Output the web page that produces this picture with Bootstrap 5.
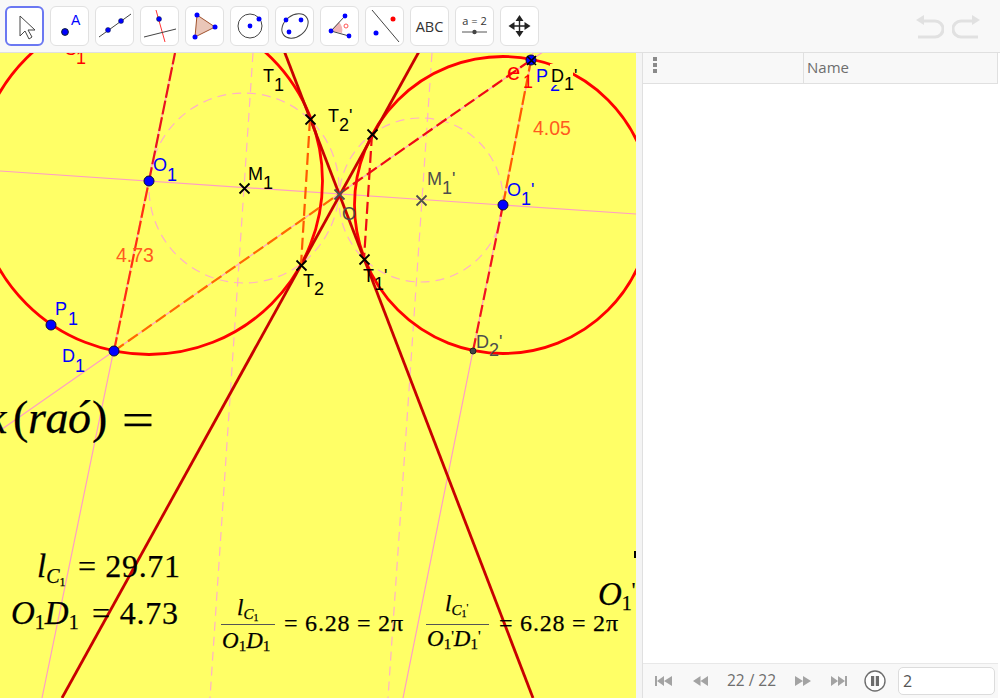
<!DOCTYPE html>
<html lang="en">
<head>
    <meta charset="UTF-8">
    <meta name="viewport" content="width=device-width, initial-scale=1.0">
    <title>GeoGebra</title>
    <link href="https://cdn.jsdelivr.net/npm/bootstrap@5.3.1/dist/css/bootstrap.min.css" rel="stylesheet">
    <style>
        html, body { height: 100%; overflow: hidden; background: #fff; }
        .ggb-app { width: 1000px; height: 698px; font-family: "Open Sans", "Noto Sans", sans-serif; }
        .ggb-top { height: 53px; background: #f8f8f8; border-bottom: 1px solid #e0e0e0; padding: 6px 0 0 5px; gap: 6px; }
        .tool-btn { width: 39px; height: 40px; padding: 0; background: #fff; border: 1px solid #e1e1e1; border-radius: 6px; }
        .tool-btn.is-active { border: 2px solid #6b78f2; }
        .undo-wrap { margin-right: 20px; gap: 8px; padding-top: 9px; }
        .ggb-main { height: 645px; }
        .ggb-canvas { width: 636px; height: 645px; background: #ffff66; overflow: hidden; flex: none; }
        .ggb-canvas svg { display: block; }
        .ggb-split { width: 6px; background: #f4f4f4; flex: none; }
        .ggb-side { width: 356px; border-left: 1px solid #e0e0e0; flex: none; }
        .side-head { height: 31px; background: #f8f8f8; border-bottom: 1px solid #e0e0e0; border-right: 1px solid #e0e0e0; color: #6e6e6e; font-size: 15px; }
        .side-dots { width: 161px; padding: 4px 0 0 10px; border-right: 1px solid #e0e0e0; gap: 2px; }
        .side-dots i { display: block; width: 4px; height: 4px; background: #8a8a8a; }
        .side-name { padding: 3px 0 0 3px; }
        .side-foot { height: 35px; background: #f8f8f8; border-top: 1px solid #e8e8e8; color: #6e6e6e; font-size: 15.5px; padding-left: 12px; }
        .side-count { width: 87px; text-align: center; }
        .side-input { width: 97px; height: 28px; padding: 0 4px; margin-left: 12px; font-size: 16px; color: #555; border: 1px solid #dcdcdc; border-radius: 5px; background: #fff; }
        .nav-a { margin-right: 21px; }
        .nav-b { margin-right: 20px; }
        .nav-c { margin-right: 17px; }
        .m-big { font-family: "Liberation Serif", serif; fill: #000; stroke: #000; stroke-width: .25px; }
        .m-it { font-style: italic; }
        .lbl { font-family: "Liberation Sans", sans-serif; font-size: 18px; }
        .val { font-size: 19.5px; }
        .b { fill: #0000ff; }
        .k { fill: #000; }
        .g { fill: #4d4d4d; }
        .o { fill: #ff5a1e; }
        .r { fill: #ff0000; }
    </style>
</head>
<body>
<div class="ggb-app d-flex flex-column">
    <div class="ggb-top d-flex">
        <button class="btn tool-btn is-active"><svg width="35" height="36" viewBox="0 0 35 36"><path d="M13 8v20l5-5 4 8 3-2-4-7h7z" fill="#fff" stroke="#444" stroke-width="1"/></svg></button>
        <button class="btn tool-btn"><svg width="37" height="38" viewBox="0 0 37 38"><circle cx="14" cy="25" r="3.4" fill="#00f" stroke="#123"/><text x="20" y="18" font-family="Liberation Sans" font-size="14" fill="#00f">A</text></svg></button>
        <button class="btn tool-btn"><svg width="37" height="38" viewBox="0 0 37 38"><path d="M3 30 35 7" stroke="#444"/><circle cx="12" cy="23" r="2.5" fill="#00f" stroke="#123" stroke-width=".5"/><circle cx="25" cy="14" r="2.5" fill="#00f" stroke="#123" stroke-width=".5"/></svg></button>
        <button class="btn tool-btn"><svg width="37" height="38" viewBox="0 0 37 38"><path d="M15 3l9 32" stroke="#f33"/><path d="M3 30l32-8" stroke="#444"/><circle cx="18" cy="12" r="2.5" fill="#00f" stroke="#123" stroke-width=".5"/></svg></button>
        <button class="btn tool-btn"><svg width="37" height="38" viewBox="0 0 37 38"><path d="M11 8 9 30l20-10z" fill="#eac6b8" stroke="#a0522d"/><circle cx="11" cy="8" r="2.5" fill="#00f"/><circle cx="9" cy="30" r="2.5" fill="#00f"/><circle cx="29" cy="20" r="2.5" fill="#00f"/></svg></button>
        <button class="btn tool-btn"><svg width="37" height="38" viewBox="0 0 37 38"><circle cx="19" cy="19" r="12" fill="none" stroke="#444"/><circle cx="19" cy="19" r="2.4" fill="#00f"/><circle cx="28" cy="12" r="2.5" fill="#00f"/></svg></button>
        <button class="btn tool-btn"><svg width="37" height="38" viewBox="0 0 37 38"><ellipse cx="19" cy="19" rx="14.5" ry="10.5" transform="rotate(-38 19 19)" fill="none" stroke="#444"/><circle cx="10" cy="13" r="2.4" fill="#00f"/><circle cx="25" cy="13" r="2.4" fill="#00f"/><circle cx="13" cy="25" r="2.4" fill="#00f"/></svg></button>
        <button class="btn tool-btn"><svg width="37" height="38" viewBox="0 0 37 38"><path d="M10 24 18 15A12 12 0 0 1 21 26z" fill="#f0b4b4"/><path d="M24 9 10 24l18 5" fill="none" stroke="#444"/><circle cx="10" cy="24" r="2.4" fill="#00f"/><circle cx="24" cy="9" r="2.4" fill="#00f"/><circle cx="28" cy="29" r="2.4" fill="#00f"/><circle cx="25" cy="19" r="2" fill="none" stroke="#f55"/></svg></button>
        <button class="btn tool-btn"><svg width="37" height="38" viewBox="0 0 37 38"><path d="M6 3 33 35" stroke="#444"/><circle cx="27" cy="12" r="2.5" fill="#f00"/><circle cx="10" cy="26" r="2.5" fill="#00f"/></svg></button>
        <button class="btn tool-btn"><svg width="37" height="38" viewBox="0 0 37 38"><text x="18.5" y="25" text-anchor="middle" font-family="Open Sans" font-size="14.5" fill="#333">ABC</text></svg></button>
        <button class="btn tool-btn"><svg width="37" height="38" viewBox="0 0 37 38"><text x="18.5" y="18" text-anchor="middle" font-family="Open Sans" font-size="11" fill="#333">a = 2</text><path d="M6 25h25" stroke="#555"/><circle cx="18.5" cy="25" r="2.2" fill="#444"/></svg></button>
        <button class="btn tool-btn"><svg width="37" height="38" viewBox="0 0 37 38"><path d="M18.5 10v18M10 19h18" stroke="#222" stroke-width="1.4"/><path d="M18.5 8l-4 6h8zM18.5 30l-4-6h8zM7.5 19l6-4v8zM29.5 19l-6-4v8z" fill="#222"/></svg></button>
        <div class="undo-wrap d-flex ms-auto">
            <svg width="28" height="24" viewBox="0 0 28 24"><path d="M7 6H19a8 8 0 0 1 0 16H2" fill="none" stroke="#e1e1e1" stroke-width="3"/><path d="M0 5 8 0v10z" fill="#e1e1e1"/></svg>
            <svg width="28" height="24" viewBox="0 0 28 24"><path d="M21 6H9a8 8 0 0 0 0 16h17" fill="none" stroke="#e1e1e1" stroke-width="3"/><path d="M28 5 20 0v10z" fill="#e1e1e1"/></svg>
        </div>
    </div>
    <div class="ggb-main d-flex">
        <div class="ggb-canvas">
            <svg width="636" height="645" viewBox="0 53 636 645">
                <!-- lineas finas -->
                <g stroke="#ff9ec4" stroke-width="1.2" fill="none">
                    <path d="M0 171 636 214"/>
                    <path d="M0 430.6 531 60l12-8"/>
                    <path d="M42 698 175 53"/>
                    <path d="M403 698 533 53"/>
                </g>
                <g stroke="#ffb0c8" stroke-width="1.2" fill="none" stroke-dasharray="9 6">
                    <circle cx="244" cy="188" r="95"/>
                    <circle cx="421" cy="200" r="82"/>
                    <path d="M253 53 210 698"/>
                    <path d="M432 53 388 698"/>
                </g>
                <!-- circunferencias -->
                <g stroke="#ff0000" stroke-width="2.8" fill="none">
                    <circle cx="149" cy="181" r="173.5"/>
                    <circle cx="503" cy="205" r="148.5"/>
                </g>
                <!-- tangentes -->
                <g stroke="#c80000" stroke-width="2.8" fill="none">
                    <path d="M283 48 533 698"/>
                    <path d="M421 48 62 698"/>
                </g>
                <!-- radios -->
                <g stroke-width="2.2" fill="none" stroke-dasharray="12 5">
                    <path d="M114 351 149 181" stroke="#ff3010" stroke-dasharray="14 3"/>
                    <path d="M149 181 175 53" stroke="#e8141e" stroke-dasharray="14 3"/>
                    <path d="M114 351 339 194" stroke="#ff6a00"/>
                    <path d="M339 194 531 60" stroke="#ee0a14"/>
                    <path d="M503 205 531 60" stroke="#ff5a00" stroke-dasharray="14 3"/>
                    <path d="M503 205 473 351" stroke="#f0141e"/>
                    <path d="M310 119 301 265" stroke="#ff5a00"/>
                    <path d="M372 134 364 259" stroke="#ee0a14"/>
                </g>
                <!-- cruces -->
                <g stroke="#000" stroke-width="1.8">
                    <path d="M305.500 114.500l10 10m0-10-10 10"/>
                    <path d="M367.500 129.500l10 10m0-10-10 10"/>
                    <path d="M296.500 260.500l10 10m0-10-10 10"/>
                    <path d="M359.500 254.500l10 10m0-10-10 10"/>
                    <path d="M239.500 183.500l10 10m0-10-10 10"/>
                </g>
                <g stroke="#4d4d4d" stroke-width="1.8">
                    <path d="M334.500 189.500l10 10m0-10-10 10"/>
                    <path d="M416.500 195.500l10 10m0-10-10 10"/>
                </g>
                <!-- puntos -->
                <g fill="#0000ff" stroke="#0a0a33" stroke-width="1">
                    <circle cx="149" cy="181" r="5"/>
                    <circle cx="51" cy="325" r="5"/>
                    <circle cx="114" cy="351" r="5"/>
                    <circle cx="503" cy="205" r="5"/>
                    <circle cx="531" cy="60" r="5"/>
                </g>
                <circle cx="473" cy="351" r="3" fill="#444" stroke="#222"/>
                <path d="M527 56l9 9m0-9-9 9" stroke="#000" stroke-width="1.6"/>
                <!-- etiquetas -->
                <g class="lbl">
                    <text x="64" y="55" class="r">C<tspan dx="-1" dy="9">1</tspan></text>
                    <text x="153" y="171" class="b">O<tspan dy="10">1</tspan></text>
                    <text x="55" y="315" class="b">P<tspan dx="1" dy="10">1</tspan></text>
                    <text x="62" y="362" class="b">D<tspan dy="10">1</tspan></text>
                    <text x="263" y="82" class="k">T<tspan dy="9">1</tspan></text>
                    <text x="328" y="122" class="k">T<tspan dy="9">2</tspan><tspan dy="-9">'</tspan></text>
                    <text x="248" y="180" class="k">M<tspan dy="9">1</tspan></text>
                    <text x="427" y="185" class="g">M<tspan dy="9">1</tspan><tspan dy="-9">'</tspan></text>
                    <text x="342" y="220" class="g">O</text>
                    <text x="303" y="287" class="k">T<tspan dy="8">2</tspan></text>
                    <text x="363" y="282" class="k">T<tspan dy="8">1</tspan><tspan dy="-8">'</tspan></text>
                    <text x="507" y="196" class="b">O<tspan dy="9">1</tspan><tspan dy="-9">'</tspan></text>
                    <text x="476" y="348" class="g">D<tspan dy="8">2</tspan><tspan dy="-8">'</tspan></text>
                    <text x="507" y="80" class="r" font-size="24">e</text>
                    <text x="523" y="88" class="r">1</text>
                    <text x="536" y="82" class="b">P<tspan dx="2" dy="9">2</tspan></text>
                    <rect x="550" y="64" width="23" height="21" fill="#ffff66"/>
                    <text x="551" y="82" class="k">D<tspan dy="8">1</tspan><tspan dy="-8">'</tspan></text>
                    <text x="533" y="135" class="o val">4.05</text>
                    <text x="116" y="262" class="o val">4.73</text>
                </g>
                <!-- formulas -->
                <g class="m-big">
                    <text x="-14" y="433" font-size="46" class="m-it">k</text>
                    <text x="13" y="433" font-size="46">(</text>
                    <text x="28" y="433" font-size="46" class="m-it" textLength="63">raó</text>
                    <text x="92" y="433" font-size="46">)</text>
                    <text x="122" y="435" font-size="46" textLength="32" lengthAdjust="spacingAndGlyphs">=</text>
                    <text x="37" y="577" font-size="33"><tspan class="m-it">l</tspan><tspan class="m-it" font-size="20" dy="6">C</tspan><tspan font-size="12" dy="3">1</tspan></text>
                    <text x="78" y="577" font-size="32" textLength="102">= 29.71</text>
                    <text x="11" y="624" font-size="33"><tspan class="m-it">O</tspan><tspan font-size="20" dy="5">1</tspan><tspan class="m-it" dy="-5">D</tspan><tspan font-size="20" dy="5">1</tspan></text>
                    <text x="92" y="624" font-size="32" textLength="86">= 4.73</text>
                    <text x="237" y="615" font-size="23"><tspan class="m-it">l</tspan><tspan class="m-it" font-size="15" dy="4">C</tspan><tspan font-size="10" dy="2">1</tspan></text>
                    <path d="M221 624.5h54" stroke="#555" stroke-width="1"/>
                    <text x="222" y="648" font-size="23"><tspan class="m-it">O</tspan><tspan font-size="15" dy="3">1</tspan><tspan class="m-it" dy="-3">D</tspan><tspan font-size="15" dy="3">1</tspan></text>
                    <text x="284" y="631" font-size="24" textLength="119">= 6.28 = 2π</text>
                    <text x="445" y="611" font-size="23"><tspan class="m-it">l</tspan><tspan class="m-it" font-size="15" dy="4">C</tspan><tspan font-size="10" dy="2">1</tspan><tspan font-size="10" dy="-6">'</tspan></text>
                    <path d="M426 624.5h63" stroke="#555" stroke-width="1"/>
                    <text x="427" y="646" font-size="23"><tspan class="m-it">O</tspan><tspan font-size="15" dy="3">1</tspan><tspan font-size="15" dy="-8">'</tspan><tspan class="m-it" dy="5">D</tspan><tspan font-size="15" dy="3">1</tspan><tspan font-size="15" dy="-8">'</tspan></text>
                    <text x="499" y="631" font-size="24" textLength="119">= 6.28 = 2π</text>
                    <text x="598" y="605" font-size="33"><tspan class="m-it">O</tspan><tspan font-size="20" dy="5">1</tspan><tspan font-size="20" dy="-13">'</tspan></text>
                </g>
                <path d="M635 551v7" stroke="#000" stroke-width="2"/>
            </svg>
        </div>
        <div class="ggb-split"></div>
        <div class="ggb-side d-flex flex-column">
            <div class="side-head d-flex">
                <div class="side-dots d-flex flex-column"><i></i><i></i><i></i></div>
                <div class="side-name">Name</div>
            </div>
            <div class="flex-grow-1 bg-white"></div>
            <div class="side-foot d-flex align-items-center">
                <svg class="nav-a" width="17" height="10" viewBox="0 0 17 10" fill="#a3a3a3"><path d="M0 0h2v10H0zM9 0v10L2 5zM17 0v10l-8-5z"/></svg>
                <svg width="15" height="10" viewBox="0 0 15 10" fill="#a3a3a3"><path d="M7.5 0v10L0 5zM15 0v10L7.5 5z"/></svg>
                <div class="side-count">22 / 22</div>
                <svg class="nav-b" width="16" height="10" viewBox="0 0 16 10" fill="#a3a3a3"><path d="M0 0v10l8-5zM8 0v10l8-5z"/></svg>
                <svg class="nav-c" width="16" height="10" viewBox="0 0 16 10" fill="#a3a3a3"><path d="M0 0v10l7-5zM7 0v10l7-5zM14 0h2v10h-2z"/></svg>
                <svg width="22" height="22" viewBox="0 0 22 22"><circle cx="11" cy="11" r="10" fill="#fff" stroke="#6e6e6e" stroke-width="1.4"/><path d="M7 6h3.2v10H7zM11.8 6H15v10h-3.2z" fill="#6e6e6e"/></svg>
                <input class="side-input" type="text" value="2">
            </div>
        </div>
    </div>
</div>
<script src="https://cdn.jsdelivr.net/npm/bootstrap@5.3.1/dist/js/bootstrap.bundle.min.js"></script>
</body>
</html>
